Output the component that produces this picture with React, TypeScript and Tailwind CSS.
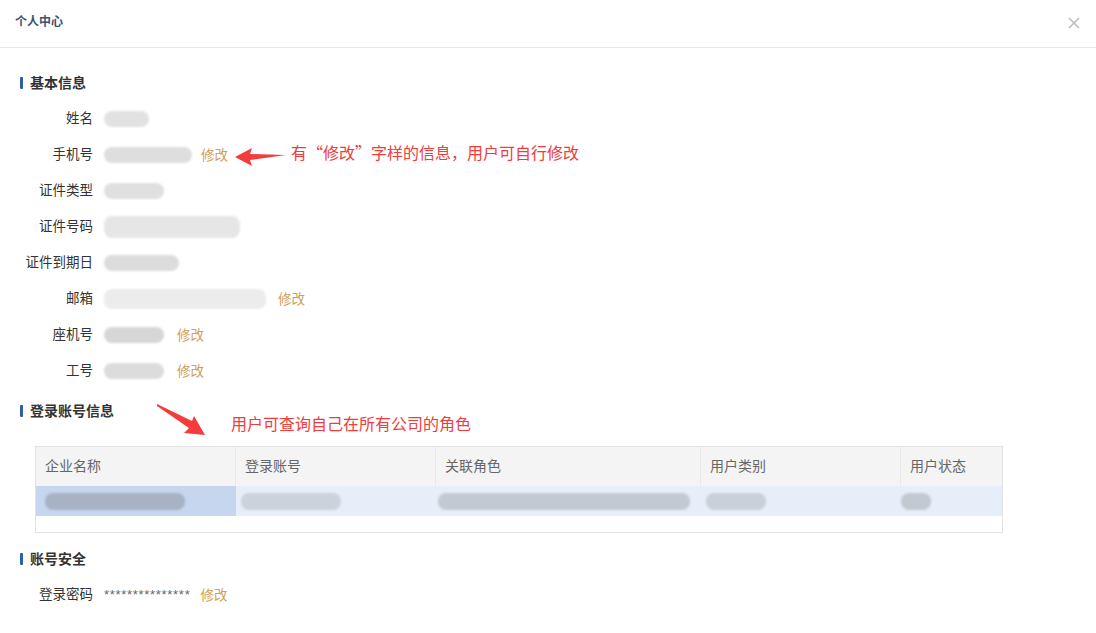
import React from "react";

const Blur = ({ w, c = "#e2e2e2", h = 16 }: { w: number; c?: string; h?: number }) => (
  <div className="rounded-[8px] blur-[1.2px]" style={{ width: w, height: h, background: c }} />
);

const Edit = () => <span className="text-[13.5px] text-[#cf9f5c] cursor-pointer">修改</span>;

const Row = ({ label, children }: { label: string; children: React.ReactNode }) => (
  <div className="flex h-[36px] items-center">
    <div className="w-[73px] text-right text-[13.5px] text-[#333]">{label}</div>
    <div className="ml-[11px] flex items-center">{children}</div>
  </div>
);

const Section = ({ title }: { title: string }) => (
  <div className="flex h-[20px] items-center">
    <div className="h-[12px] w-[3px] rounded-[1px] bg-[#2d5fa8]" />
    <div className="ml-[7px] text-[14px] font-bold text-[#333]">{title}</div>
  </div>
);

export default function App() {
  return (
    <div
      className="relative h-[633px] w-[1096px] overflow-hidden bg-white"
      style={{ fontFamily: '"Liberation Sans", "Noto Sans CJK SC", sans-serif' }}
    >
      <div className="flex h-[48px] items-start justify-between border-b border-[#e8e8e8] px-[15px]">
        <div className="mt-[13px] text-[12px] font-bold text-[#3a5270]">个人中心</div>
        <svg className="mt-[17px] mr-[1px]" width="12" height="12" viewBox="0 0 12 12">
          <path d="M1 1L11 11M11 1L1 11" stroke="#bdbdbd" strokeWidth="1.6" />
        </svg>
      </div>

      <div className="pl-[20px] pt-[25px]">
        <Section title="基本信息" />
        <div className="mt-[8px]">
          <Row label="姓名">
            <Blur w={45} />
          </Row>
          <Row label="手机号">
            <Blur w={88} c="#dedede" />
            <div className="ml-[9px]">
              <Edit />
            </div>
          </Row>
          <Row label="证件类型">
            <Blur w={60} c="#e0e0e0" />
          </Row>
          <Row label="证件号码">
            <Blur w={136} c="#e6e6e6" h={22} />
          </Row>
          <Row label="证件到期日">
            <Blur w={75} c="#dcdcdc" />
          </Row>
          <Row label="邮箱">
            <Blur w={162} c="#ececec" h={20} />
            <div className="ml-[12px]">
              <Edit />
            </div>
          </Row>
          <Row label="座机号">
            <Blur w={60} c="#d6d6d6" />
            <div className="ml-[13px]">
              <Edit />
            </div>
          </Row>
          <Row label="工号">
            <Blur w={60} c="#dcdcdc" />
            <div className="ml-[13px]">
              <Edit />
            </div>
          </Row>
        </div>

        <div className="mt-[12px]">
          <Section title="登录账号信息" />
        </div>

        <div className="ml-[15px] mt-[25px] w-[968px] border border-[#e3e3e3]">
          <div className="grid h-[39px] grid-cols-[200px_200px_265px_200px_1fr] bg-[#f4f4f4] text-[14px] text-[#666]">
            {["企业名称", "登录账号", "关联角色", "用户类别", "用户状态"].map((t, i) => (
              <div
                key={t}
                className={`flex items-center px-[9px] ${i < 4 ? "border-r border-[#e9e9e9]" : ""}`}
              >
                {t}
              </div>
            ))}
          </div>
          <div className="grid h-[30px] grid-cols-[200px_200px_265px_200px_1fr] bg-[#e6eff9]">
            <div className="flex items-center bg-[#c5d6ee] px-[9px]">
              <Blur w={140} c="#a7b2c4" h={17} />
            </div>
            <div className="flex items-center px-[5px]">
              <Blur w={100} c="#cbd2dc" h={17} />
            </div>
            <div className="flex items-center px-[2px]">
              <Blur w={252} c="#c3c9d2" h={17} />
            </div>
            <div className="flex items-center px-[5px]">
              <Blur w={60} c="#c9d0da" h={17} />
            </div>
            <div className="flex items-center px-[0px]">
              <Blur w={30} c="#c3c9d1" h={17} />
            </div>
          </div>
          <div className="h-[16px]" />
        </div>

        <div className="mt-[16px]">
          <Section title="账号安全" />
        </div>
        <div className="mt-[8px]">
          <Row label="登录密码">
            <span className="text-[13px] tracking-[0.7px] text-[#666]">***************</span>
            <div className="ml-[10px]">
              <Edit />
            </div>
          </Row>
        </div>
      </div>

      {/* annotation 1 */}
      <svg className="absolute left-[230px] top-[144px]" width="60" height="26" viewBox="0 0 60 26">
        <polygon points="5,13 22,4 20,10 56,11 20,16 22,22" fill="#f43c3c" />
      </svg>
      <div
        className="absolute left-[291px] top-[140px] text-[16px] text-[#f03c3c]"
        style={{ fontFamily: '"Noto Sans CJK SC", sans-serif' }}
      >
        有“修改”字样的信息，用户可自行修改
      </div>

      {/* annotation 2 */}
      <svg className="absolute left-[150px] top-[398px]" width="62" height="42" viewBox="0 0 62 42">
        <polygon points="7,6 42,23 44,18 55,37 34,35 39,30 7,8" fill="#f43c3c" />
      </svg>
      <div
        className="absolute left-[231px] top-[411px] text-[16px] text-[#f03c3c]"
        style={{ fontFamily: '"Noto Sans CJK SC", sans-serif' }}
      >
        用户可查询自己在所有公司的角色
      </div>
    </div>
  );
}
